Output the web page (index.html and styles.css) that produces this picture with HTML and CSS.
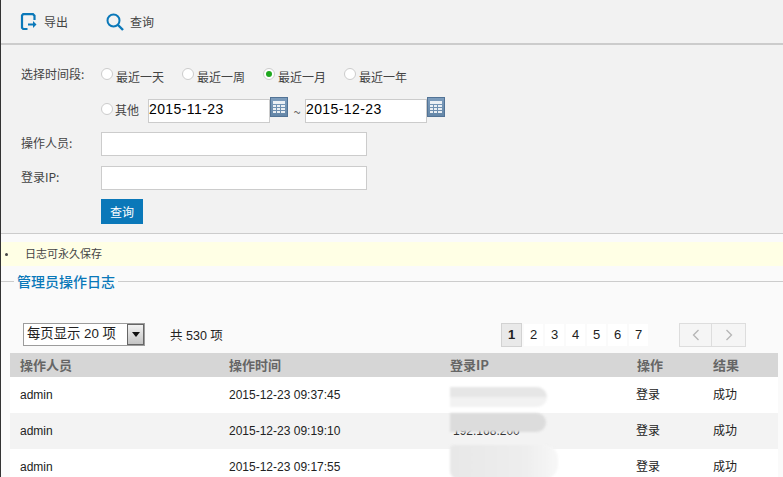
FILE: index.html
```html
<!DOCTYPE html>
<html lang="zh-CN">
<head>
<meta charset="utf-8">
<title>管理员操作日志</title>
<link rel="stylesheet" href="styles.css">
</head>
<body>
<div class="page">
  <div class="toolbar">
    <a class="tool tool-export">
      <svg width="18" height="18" viewBox="0 0 18 18"><path d="M14.500 7V2.700L13 1.200H3.200L2 2.500V14.700L3.200 16H7.500" fill="none" stroke="#0a78b9" stroke-width="2.200"/><path d="M8 11.500h5.500" stroke="#0a78b9" stroke-width="2"/><path d="M13 8l3.500 3.500L13 15z" fill="#0a78b9"/></svg>
      <span>导出</span>
    </a>
    <a class="tool tool-query">
      <svg width="18" height="18" viewBox="0 0 18 18"><circle cx="7.500" cy="7.500" r="6" fill="none" stroke="#0a78b9" stroke-width="2"/><path d="M12 12l5 5" stroke="#0a78b9" stroke-width="2.400"/></svg>
      <span>查询</span>
    </a>
  </div>
  <form class="filter">
    <div class="row row-radios">
      <label class="flabel">选择时间段:</label>
      <span class="radio-item"><i class="radio"></i><span>最近一天</span></span>
      <span class="radio-item"><i class="radio"></i><span>最近一周</span></span>
      <span class="radio-item"><i class="radio on"></i><span>最近一月</span></span>
      <span class="radio-item"><i class="radio"></i><span>最近一年</span></span>
    </div>
    <div class="row row-dates">
      <span class="radio-item other"><i class="radio"></i><span>其他</span></span>
      <span class="date">2015-11-23</span>
      <span class="cal"><svg width="12" height="12" viewBox="0 0 12 12"><path fill="#fff" opacity=".85" d="M0 0h12v3H0zM0 4h3v2H0zM4 4h3v2H4zM8 4h4v2H8zM0 7h3v2H0zM4 7h3v2H4zM8 7h4v2H8zM0 10h3v2H0zM4 10h3v2H4zM8 10h4v2H8z"/></svg></span>
      <span class="tilde">~</span>
      <span class="date">2015-12-23</span>
      <span class="cal"><svg width="12" height="12" viewBox="0 0 12 12"><path fill="#fff" opacity=".85" d="M0 0h12v3H0zM0 4h3v2H0zM4 4h3v2H4zM8 4h4v2H8zM0 7h3v2H0zM4 7h3v2H4zM8 7h4v2H8zM0 10h3v2H0zM4 10h3v2H4zM8 10h4v2H8z"/></svg></span>
    </div>
    <div class="row row-field field-op">
      <label class="flabel">操作人员:</label>
      <span class="field"></span>
    </div>
    <div class="row row-field field-ip">
      <label class="flabel">登录IP:</label>
      <span class="field"></span>
    </div>
    <div class="row row-btn"><span class="btn">查询</span></div>
  </form>
  <div class="content">
    <ul class="notice"><li>日志可永久保存</li></ul>
    <div class="legend"><span>管理员操作日志</span></div>
    <div class="controls">
      <div class="select"><span class="select-text">每页显示 20 项</span><span class="select-arrow"><i></i></span></div>
      <span class="total">共 530 项</span>
      <div class="pages">
        <span class="pg cur">1</span><span class="pg">2</span><span class="pg">3</span><span class="pg">4</span><span class="pg">5</span><span class="pg">6</span><span class="pg">7</span>
      </div>
      <div class="nav">
        <span class="nav-btn"><svg width="8" height="12" viewBox="0 0 8 12"><path d="M6.500 1L1.500 6l5 5" fill="none" stroke="#b5b5b5" stroke-width="1.300"/></svg></span>
        <span class="nav-btn"><svg width="8" height="12" viewBox="0 0 8 12"><path d="M1.500 1l5 5-5 5" fill="none" stroke="#b5b5b5" stroke-width="1.300"/></svg></span>
      </div>
    </div>
    <table class="log">
      <colgroup><col class="c1"><col class="c2"><col class="c3"><col class="c4"><col class="c5"></colgroup>
      <thead><tr><th>操作人员</th><th>操作时间</th><th>登录IP</th><th>操作</th><th>结果</th></tr></thead>
      <tbody>
        <tr><td>admin</td><td>2015-12-23 09:37:45</td><td class="ipcell"><span class="blur b1"></span></td><td>登录</td><td>成功</td></tr>
        <tr><td>admin</td><td>2015-12-23 09:19:10</td><td class="ipcell"><span class="iptext">192.168.200</span><span class="blur b2"></span></td><td>登录</td><td>成功</td></tr>
        <tr><td>admin</td><td>2015-12-23 09:17:55</td><td class="ipcell"><span class="blur b3"></span></td><td>登录</td><td>成功</td></tr>
      </tbody>
    </table>
  </div>
</div>
</body>
</html>
```
FILE: styles.css
```css
* { box-sizing: border-box; }
html, body { margin: 0; padding: 0; height: 100%; overflow: hidden; }
body { background: #fafafa; font-family: "Noto Sans CJK SC", "Liberation Sans", sans-serif; font-size: 12px; color: #444; }
.page { border-left: 1px solid #333; height: 477px; overflow: hidden; }

.toolbar { height: 45px; background: #f2f2f2; border-bottom: 2px solid #ccc; display: flex; align-items: center; padding-left: 19px; }
.tool { display: flex; align-items: center; gap: 6px; color: #444; font-size: 12px; }
.tool-query { margin-left: 38px; }

.filter { background: #f2f2f2; height: 189px; border-bottom: 1px solid #ccc; padding-top: 19px; }
.row { display: flex; align-items: center; }
.flabel { width: 100px; padding: 0 0 3px 20px; color: #444; flex: none; }
.row-radios { height: 22px; }
.radio-item { display: inline-flex; align-items: center; width: 81px; }
.radio-item span { margin-left: 3px; padding-top: 2px; }
.radio { width: 12px; height: 12px; margin-top: -2px; border-radius: 50%; background: #fff; border: 1px solid #ccc; display: block; position: relative; flex: none; }
.radio.on::after { content: ""; position: absolute; left: 2px; top: 2px; width: 6px; height: 6px; border-radius: 50%; background: #1fa81f; }
.row-dates { height: 24px; margin-top: 13px; padding-left: 100px; }
.row-dates .other { width: 47px; }
.other .radio { margin-top: -4px; }
.other span { margin-left: 2px; padding: 0 0 3px; }
.date { width: 122px; height: 24px; background: #fff; border: 1px solid #ccc; font-family: "Liberation Sans", sans-serif; font-size: 14px; letter-spacing: .4px; color: #000; line-height: 19px; }
.cal { width: 18px; height: 20px; margin-top: -8px; background: linear-gradient(#7d9dbd, #6587a8); border: 1px solid #527396; display: flex; align-items: center; justify-content: center; }
.tilde { width: 17px; text-align: center; color: #666; padding-left: 1px; font-size: 13px; }
.row-field { height: 24px; }
.field-op { margin-top: 9px; }
.field-ip { margin-top: 10px; }
.field { width: 266px; height: 24px; background: #fff; border: 1px solid #ccc; }
.row-btn { padding-left: 100px; margin-top: 9px; }
.btn { width: 42px; height: 25px; background: #0a78b9; color: #fff; display: flex; align-items: center; justify-content: center; }

.content { padding-top: 8px; }
.notice { margin: 0; padding: 0; height: 24px; background: #ffffe5; list-style: none; position: relative; line-height: 23px; font-size: 11px; color: #444; }
.notice li { padding-left: 24px; }
.notice li::before { content: ""; position: absolute; left: 4px; top: 11px; width: 3px; height: 3px; border-radius: 50%; background: #444; }
.legend { height: 30px; position: relative; }
.legend::before { content: ""; position: absolute; left: 0; right: 0; top: 15px; border-top: 1px solid #ccc; }
.legend span { position: absolute; left: 13px; top: 7px; padding: 0 3px; background: #fafafa; color: #0a78b9; font-size: 14px; font-weight: 500; line-height: 16px; }

.controls { height: 37px; margin-top: 20px; display: flex; align-items: center; padding: 0 37px 0 22px; }
.select { width: 122px; height: 23px; display: flex; border: 1px solid #9c9c9c; background: #fff; color: #222; font-family: "Liberation Sans", "Noto Sans CJK SC", sans-serif; font-size: 13.33px; }
.select-text { flex: 1; line-height: 20px; padding-left: 3px; white-space: nowrap; }
.select-arrow { width: 17px; background: linear-gradient(#f2f2f2, #c4c4c4); border: 1px solid #666; display: flex; align-items: center; justify-content: center; }
.select-arrow i { border: 4px solid transparent; border-top: 5px solid #111; border-bottom: 0; }
.total { margin-left: 25px; color: #222; font-family: "Liberation Sans", "Noto Sans CJK SC", sans-serif; font-size: 12.5px; }
.pages { display: flex; align-items: center; gap: 2px; margin-left: auto; font-family: "Liberation Sans", sans-serif; color: #222; }
.pg { width: 19px; height: 22px; background: #fff; display: flex; align-items: center; justify-content: center; font-size: 13px; }
.pg.cur { width: 21px; height: 24px; background: #e9e9e9; border: 1px solid #d2d2d2; font-weight: 700; }
.nav { display: flex; margin-left: 31px; }
.nav-btn { width: 33px; height: 24px; background: #f5f5f5; border: 1px solid #ddd; display: flex; align-items: center; justify-content: center; }
.nav-btn + .nav-btn { border-left: 0; width: 34px; }

.log { border-collapse: collapse; table-layout: fixed; width: 768px; margin-left: 9px; color: #222; }
.c1 { width: 209px; } .c2 { width: 221px; } .c3 { width: 187px; } .c4 { width: 76px; } .c5 { width: 75px; }
.log th { height: 24px; padding: 0 0 2px 10px; background: #d6d6d6; color: #666; font-weight: 700; text-align: left; font-size: 13px; }
.log td { height: 36px; padding: 0 0 0 10px; background: #fff; font-family: "Liberation Sans", "Noto Sans CJK SC", sans-serif; font-size: 12px; }
.log td:nth-child(n+4) { font-family: "Noto Sans CJK SC", sans-serif; padding-bottom: 3px; }
.log td:nth-child(4) { padding-left: 9px; }
.log tbody tr:nth-child(2) td { background: #f3f3f3; }
.ipcell { position: relative; }
.iptext { position: absolute; left: 13px; top: 11px; color: #333; }
.blur { position: absolute; display: block; filter: blur(1px); }
.b1 { left: 10px; top: 10px; width: 97px; height: 20px; background: linear-gradient(#e6e6e6 45%, #f2f2f2 55%); border-radius: 0 10px 10px 0; }
.b2 { left: 10px; top: 0; width: 96px; height: 19px; background: #dcdcdc; border-radius: 0 10px 10px 0; }
.b3 { left: 10px; top: -4px; width: 108px; height: 34px; background: linear-gradient(90deg, #e8e8e8, #eeeeee 70%, #f7f7f7); border-radius: 4px 14px 14px 8px; }
```
